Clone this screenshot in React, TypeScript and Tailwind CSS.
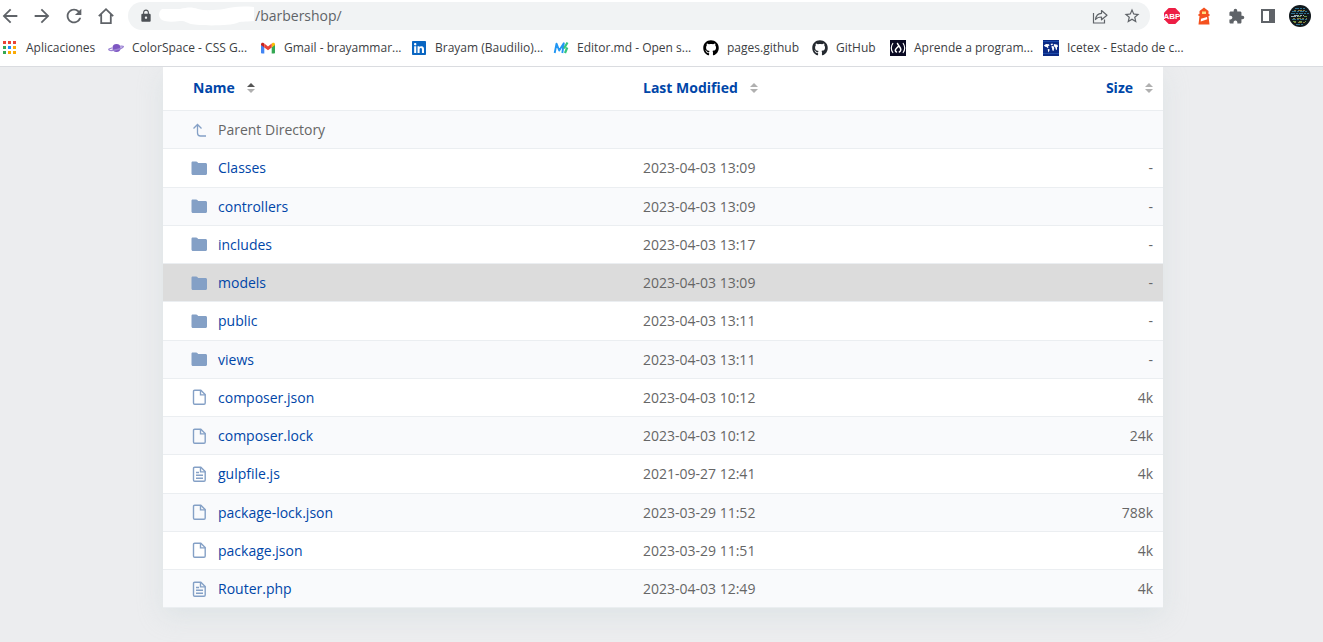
import type { ReactNode } from "react"
import { FaGithub, FaLinkedin } from "react-icons/fa"
import {
  MdArrowBack,
  MdArrowForward,
  MdExtension,
  MdLock,
  MdRefresh,
  MdStarBorder,
} from "react-icons/md"

type EntryKind = "folder" | "file" | "text"

interface Entry {
  name: string
  kind: EntryKind
  modified: string
  size: string
}

const entries: Entry[] = [
  { name: "Classes", kind: "folder", modified: "2023-04-03 13:09", size: "-" },
  { name: "controllers", kind: "folder", modified: "2023-04-03 13:09", size: "-" },
  { name: "includes", kind: "folder", modified: "2023-04-03 13:17", size: "-" },
  { name: "models", kind: "folder", modified: "2023-04-03 13:09", size: "-" },
  { name: "public", kind: "folder", modified: "2023-04-03 13:11", size: "-" },
  { name: "views", kind: "folder", modified: "2023-04-03 13:11", size: "-" },
  { name: "composer.json", kind: "file", modified: "2023-04-03 10:12", size: "4k" },
  { name: "composer.lock", kind: "file", modified: "2023-04-03 10:12", size: "24k" },
  { name: "gulpfile.js", kind: "text", modified: "2021-09-27 12:41", size: "4k" },
  { name: "package-lock.json", kind: "file", modified: "2023-03-29 11:52", size: "788k" },
  { name: "package.json", kind: "file", modified: "2023-03-29 11:51", size: "4k" },
  { name: "Router.php", kind: "text", modified: "2023-04-03 12:49", size: "4k" },
]

const activeEntry = "models"

function AppsIcon() {
  return (
    <svg viewBox="0 0 16 16" className="size-4">
      <path fill="#ea4335" d="M1 1h3v3H1zM6 1h3v3H6zM11 1h3v3h-3z" />
      <path fill="#34a853" d="M1 6h3v3H1zM1 11h3v3H1z" />
      <path fill="#1a8cff" d="M6 6h3v3H6z" />
      <path fill="#fbab05" d="M11 6h3v3h-3zM6 11h3v3H6zM11 11h3v3h-3z" />
    </svg>
  )
}

function PlanetIcon() {
  return (
    <svg viewBox="0 0 16 16" className="size-4">
      <circle cx="8.500" cy="8" r="4" fill="#7e57c2" />
      <path
        fill="none"
        stroke="#9c84d4"
        strokeWidth="1.300"
        strokeLinecap="round"
        d="M3.800 8C1.700 8.600.600 9.200.800 9.800c.400 1 4.400.7 8.500-.300s6.400-2.300 6-3.100c-.2-.4-1.200-.4-2.600-.3"
      />
    </svg>
  )
}

function GmailIcon() {
  return (
    <svg viewBox="0 0 16 16" className="size-4">
      <path fill="#4285f4" d="M1 4.500v8.200c0 .5.400.8.800.8h2.500V7z" />
      <path fill="#34a853" d="M15 4.500v8.200c0 .5-.4.8-.8.8h-2.500V7z" />
      <path fill="#fbbc04" d="M11.700 3.800V7.500L15 5V4.200c0-1.400-1.600-2-2.600-1.100z" />
      <path fill="#c5221f" d="M4.300 3.800V7.500L1 5V4.200c0-1.400 1.600-2 2.600-1.100z" />
      <path fill="#ea4335" d="M4.300 3.600 8 6.400l3.700-2.800v3.900L8 10.300 4.300 7.500z" />
    </svg>
  )
}

function EditorIcon() {
  return (
    <svg viewBox="0 0 16 16" className="size-4">
      <path
        fill="none"
        stroke="#2196f3"
        strokeWidth="1.900"
        strokeLinejoin="round"
        d="M1.700 13 3.500 3.700l2.700 6.800 4.600-7.200L9.300 13"
      />
      <path fill="none" stroke="#35c67c" strokeWidth="2.200" d="m14.500 2.500-3.500 6M14.300 7.500 12 13" />
    </svg>
  )
}

function CampIcon() {
  return (
    <svg viewBox="0 0 16 16" className="size-4">
      <path fill="#0a0a23" d="M0 0h16v16H0z" />
      <path
        fill="none"
        stroke="#fff"
        strokeWidth="1.200"
        strokeLinecap="round"
        d="M2.800 3.500C.8 6 .8 10 2.800 12.500M13.200 3.500c2 2.500 2 6.500 0 9"
      />
      <path
        fill="none"
        stroke="#fff"
        strokeWidth="1.500"
        strokeLinecap="round"
        strokeLinejoin="round"
        d="M7.500 3.500c.8 2.200 3.500 4 3.300 6.300-.1 1-.7 1.800-1.500 2.200M8.300 6.500C7 8 5.200 9 5.300 10.300c0 .8.500 1.400 1.200 1.700"
      />
    </svg>
  )
}

function IcetexIcon() {
  return (
    <svg viewBox="0 0 16 16" className="size-4">
      <path fill="#0b2a85" d="M0 0h16v16H0z" />
      <path fill="#1d4aa8" d="M0 1h16v1H0zM0 13h16v1H0z" />
      <path
        fill="#fff"
        d="M.8 5.500 3 4l3 .2.500 1.300-1.500.8.500 1.200-1 .5-1-1-1.300-.2zM4.700 8.800l2 .7-.4 1.500-1.100 1.500zM7.500 4l2-.5.5 1-1.500 1zM8.300 6.500l2-.7 1 2.200-.8 3-1.200-.8-.2-1.700zM10.800 4l3.700.7.5 1.800-1 .8v2.200l-1 .5-.7-2.500-1.300-1.300z"
      />
    </svg>
  )
}

interface Bookmark {
  label: string
  icon: ReactNode
  width: string
}

const bookmarks: Bookmark[] = [
  { label: "Aplicaciones", icon: <AppsIcon />, width: "w-[90px]" },
  { label: "ColorSpace - CSS G...", icon: <PlanetIcon />, width: "w-[136px]" },
  { label: "Gmail - brayammar...", icon: <GmailIcon />, width: "w-[135px]" },
  {
    label: "Brayam (Baudilio)...",
    icon: <FaLinkedin className="size-4 text-[#0a66c2]" />,
    width: "w-[126px]",
  },
  { label: "Editor.md - Open s...", icon: <EditorIcon />, width: "w-[134px]" },
  { label: "pages.github", icon: <FaGithub className="size-4 text-black" />, width: "w-[93px]" },
  { label: "GitHub", icon: <FaGithub className="size-4 text-[#24292f]" />, width: "w-[62px]" },
  { label: "Aprende a program...", icon: <CampIcon />, width: "w-[137px]" },
  { label: "Icetex - Estado de c...", icon: <IcetexIcon />, width: "w-[137px]" },
]

function IconButton({ label, children }: { label: string; children: ReactNode }) {
  return (
    <button type="button" aria-label={label} className="flex size-5 items-center justify-center">
      {children}
    </button>
  )
}

function Toolbar() {
  return (
    <div className="flex h-8 items-center gap-3 pr-[13px] text-[#5f6368]">
      <IconButton label="Back">
        <MdArrowBack className="size-[22px] shrink-0" />
      </IconButton>
      <IconButton label="Forward">
        <MdArrowForward className="size-[22px] shrink-0" />
      </IconButton>
      <IconButton label="Reload">
        <MdRefresh className="size-[22px] shrink-0" />
      </IconButton>
      <IconButton label="Home">
        <svg viewBox="0 0 20 20" className="size-5" fill="none" stroke="currentColor">
          <path strokeWidth="1.800" d="M2.800 10.200 10 3.200l7.200 7M5.200 8.500v8.600h9.600V8.500" />
        </svg>
      </IconButton>

      <div className="flex h-7 min-w-0 flex-1 items-center rounded-full bg-[#f1f3f4] pr-2 pl-[11px]">
        <MdLock className="size-[14px] shrink-0 text-[#4d5156]" />
        <svg viewBox="0 0 96 20" className="ml-[6px] h-5 w-24 shrink-0" fill="#fff">
          <path d="M3 3h18c8-2 12-2 18 0 8 2 18 1 26 0 8-2 16-3 30-2v14c-9 1-14 0-17 2-6 3-38 3-46 1-5-1-4-3-11-3-8 1-14 1-18-1-4-3-4-8 0-11z" />
        </svg>
        <input
          type="text"
          aria-label="Address"
          defaultValue="/barbershop/"
          className="min-w-0 flex-1 bg-transparent text-sm outline-none"
        />
        <div className="flex gap-3">
          <IconButton label="Share">
            <svg viewBox="0 0 20 20" className="size-5" fill="none" stroke="currentColor">
              <path strokeWidth="1.200" d="M3.500 7v10h11v-3.500" />
              <path
                strokeWidth="1.200"
                strokeLinejoin="round"
                d="M5.500 13.500c.5-4 2.500-6 6-6.200V4.500l5.500 4.700-5.500 4.600V11c-2.500 0-4.500.6-6 2.500z"
              />
            </svg>
          </IconButton>
          <IconButton label="Bookmark this page">
            <MdStarBorder className="size-[18px]" />
          </IconButton>
        </div>
      </div>

      <IconButton label="Adblock Plus">
        <svg viewBox="0 0 20 20" className="size-5">
          <path fill="#ed1e45" d="M6.700 2h6.600L18 6.700v6.600L13.300 18H6.700L2 13.300V6.700z" />
          <text
            x="10"
            y="13"
            fill="#fff"
            textAnchor="middle"
            className="font-['Liberation_Sans'] text-[8px] font-bold"
          >
            ABP
          </text>
        </svg>
      </IconButton>
      <IconButton label="Lighthouse">
        <svg viewBox="0 0 20 20" className="size-5">
          <path
            fill="#f4511e"
            d="M10 1.500 14.500 5v3H15.500v2h-1l1 8.500h-11l1-8.500h-1V8h1V5z"
          />
          <path fill="#ffe082" d="M8 5.500h4V8H8z" />
          <path fill="#fff" d="m7 12.800 6-1.800.3 2.200-6.600 2.300z" />
        </svg>
      </IconButton>
      <IconButton label="Extensions">
        <MdExtension className="size-[17px]" />
      </IconButton>
      <IconButton label="Side panel">
        <svg viewBox="0 0 20 20" className="size-5">
          <path fill="currentColor" fillRule="evenodd" d="M3 3h14v14H3zM5 5v10h6V5z" />
        </svg>
      </IconButton>
      <IconButton label="Profile">
        <svg viewBox="0 0 22 22" className="size-[22px] shrink-0">
          <circle cx="11" cy="11" r="11" fill="#11181c" />
          <g fill="none" strokeWidth="1">
            <path
              stroke="#2f7391"
              strokeDasharray="4 1 2 1"
              d="M6 3.500h10M3 6.500h15M2 8.500h18M3 14.500h16M7 19.500h8"
            />
            <path stroke="#8a7a3c" strokeDasharray="2 2 4 1" d="M5 5.500h13M4 13.500h14M5 17.500h12" />
            <path stroke="#6b9a45" strokeDasharray="3 3" d="M9 11.500h12M4 16.500h13" />
            <path stroke="#9fb0b6" strokeDasharray="5 1 2 1" d="M2 11.500h7M5 10.500h10" />
          </g>
        </svg>
      </IconButton>
    </div>
  )
}

function BookmarksBar() {
  return (
    <nav aria-label="Bookmarks" className="flex h-[34px] items-center gap-4 pb-[2px] pl-[2px]">
      {bookmarks.map((bookmark) => (
        <a
          key={bookmark.label}
          href="#"
          className={`flex shrink-0 items-center gap-2 text-xs whitespace-nowrap text-[#3c4043] ${bookmark.width}`}
        >
          <span className="shrink-0">{bookmark.icon}</span>
          {bookmark.label}
        </a>
      ))}
    </nav>
  )
}

function SortIcon({ active = false }: { active?: boolean }) {
  return (
    <svg viewBox="0 0 8 10" className="h-[10px] w-2">
      <path fill={active ? "#555" : "#b0b0b0"} d="M0 4 4 0l4 4z" />
      <path fill="#b0b0b0" d="m0 6 4 4 4-4z" />
    </svg>
  )
}

function EntryIcon({ kind }: { kind: EntryKind | "parent" }) {
  if (kind === "parent") {
    return (
      <svg viewBox="0 0 16 16" className="size-4" fill="none" stroke="#84a0c6" strokeWidth="1.300">
        <path d="M2.500 6.500l4-4 4 4M6.500 2.500V11c0 2 1 3 3 3H15" />
      </svg>
    )
  }
  if (kind === "folder") {
    return (
      <svg viewBox="0 0 16 16" className="size-4" fill="#84a0c6">
        <path d="M1.800 1.500h3.400c.5 0 .8.200 1.100.6L7.200 3h7.300c.9 0 1.500.7 1.500 1.500v9c0 .9-.6 1.500-1.500 1.500H2c-.9 0-1.500-.6-1.500-1.500V2.800c0-.8.500-1.300 1.300-1.300z" />
      </svg>
    )
  }
  return (
    <svg viewBox="0 0 16 16" className="size-4" fill="none" stroke="#84a0c6" strokeWidth="1.400">
      <path d="M3.700 1.200h6.100l4.400 4.400v8.400c0 .8-.4 1.200-1.200 1.200H3.700c-.8 0-1.200-.4-1.200-1.200V2.400c0-.8.4-1.200 1.200-1.200z" />
      <path d="M9.500 1.200v4.700h4.700" />
      {kind === "text" && <path d="M5 6.500h3M5 9.300h7M5 12.200h7" />}
    </svg>
  )
}

function DirectoryListing() {
  return (
    <table className="w-full table-fixed border-separate border-spacing-0 bg-white text-sm leading-snug text-[#666] shadow-[0_8px_24px_rgba(190,205,208,0.3)] [&_td]:border-b [&_td]:border-[#ebeef1] [&_td]:py-[9px] [&_th]:border-b [&_th]:border-[#ebeef1] [&_th]:pb-[2px]">
      <thead className="text-[#0046a8]">
        <tr className="h-11">
          <th className="w-[48%] pl-[30px] text-left">
            <button type="button" className="flex items-center gap-3 font-bold">
              Name <SortIcon active />
            </button>
          </th>
          <th className="text-left">
            <button type="button" className="flex items-center gap-3 font-bold">
              Last Modified <SortIcon />
            </button>
          </th>
          <th className="w-[20%] pr-[10px]">
            <button type="button" className="ml-auto flex items-center gap-3 font-bold">
              Size <SortIcon />
            </button>
          </th>
        </tr>
      </thead>
      <tbody>
        <tr className="bg-[#f9fafc]">
          <td className="pl-7">
            <a href="#" className="flex items-center gap-[11px]">
              <EntryIcon kind="parent" />
              Parent Directory
            </a>
          </td>
          <td />
          <td />
        </tr>
        {entries.map((entry) => (
          <tr
            key={entry.name}
            className={entry.name === activeEntry ? "bg-[#dcdcdc]" : "odd:bg-[#f9fafc]"}
          >
            <td className="pl-7">
              <a href="#" className="flex items-center gap-[11px] text-[#0046a8]">
                <EntryIcon kind={entry.kind} />
                {entry.name}
              </a>
            </td>
            <td>{entry.modified}</td>
            <td className="pr-[10px] text-right">{entry.size}</td>
          </tr>
        ))}
      </tbody>
    </table>
  )
}

export default function App() {
  return (
    <div className="flex min-h-screen flex-col bg-[#ecedef] font-['Open_Sans',sans-serif]">
      <header className="relative overflow-hidden border-b border-[#dadce0] bg-white">
        <Toolbar />
        <BookmarksBar />
      </header>
      <main className="flex-1 pb-[34px] pl-[3px]">
        <div className="mx-auto max-w-[1000px]">
          <DirectoryListing />
        </div>
      </main>
    </div>
  )
}
